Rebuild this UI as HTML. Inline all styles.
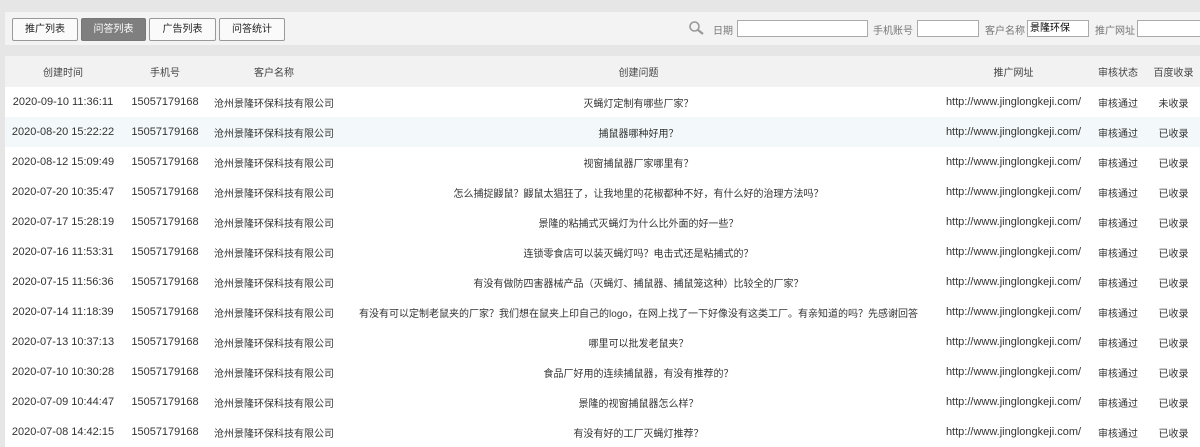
<!DOCTYPE html>
<html><head><meta charset="utf-8"><style>
body{margin:0;width:1200px;height:445px;overflow:hidden;background:#e6e6e6;font-family:"Liberation Sans","Noto Sans CJK SC",sans-serif;font-size:11px;color:#333;position:relative}
.bar{position:absolute;left:5px;top:12px;width:1195px;height:33px;background:#f3f3f3}
.btn{position:absolute;top:6px;border:1px solid #999;border-radius:2px;background:#fafafa;text-align:center;line-height:21px;font-size:10px;color:#222;box-sizing:border-box;height:23px}
.btn.on{background:#7f7f7f;color:#fff;border-color:#777}
.lbl{position:absolute;top:10px;color:#777;font-size:10px}
.inp{position:absolute;top:8px;height:17px;border:1px solid #aaa;background:#fff;box-sizing:border-box;font-size:10px;line-height:15px;padding-left:2px;color:#000}
table{position:absolute;left:5px;top:56px;width:1195px;border-collapse:collapse;table-layout:fixed}
td,th{text-align:center;white-space:nowrap;overflow:hidden;padding:0;font-weight:normal}
th{height:31px;background:#f2f2f2;color:#444;font-size:10px}
td{height:30px}
td.c{font-size:10px}
tr.a td{background:#fff}tr.b td{background:#f3f8fa}
</style></head><body>
<div class="bar">
<div class="btn" style="left:7px;width:66px">推广列表</div>
<div class="btn on" style="left:76px;width:65px">问答列表</div>
<div class="btn" style="left:144px;width:67px">广告列表</div>
<div class="btn" style="left:214px;width:66px">问答统计</div>
<svg style="position:absolute;left:683px;top:8px" width="18" height="16" viewBox="0 0 18 16"><circle cx="6.5" cy="6.5" r="4.5" fill="none" stroke="#999" stroke-width="1.6"/><path d="M10 10 L15 14" stroke="#999" stroke-width="2.2"/></svg>
<span class="lbl" style="left:708px">日期</span><div class="inp" style="left:732px;width:131px"></div>
<span class="lbl" style="left:868px">手机账号</span><div class="inp" style="left:912px;width:62px"></div>
<span class="lbl" style="left:980px">客户名称</span><div class="inp" style="left:1022px;width:62px">景隆环保</div>
<span class="lbl" style="left:1090px">推广网址</span><div class="inp" style="left:1132px;width:70px"></div>
</div>
<table>
<colgroup><col style="width:116px"><col style="width:88px"><col style="width:130px"><col style="width:599px"><col style="width:151px"><col style="width:58px"><col style="width:53px"></colgroup>
<tr><th>创建时间</th><th>手机号</th><th>客户名称</th><th>创建问题</th><th>推广网址</th><th>审核状态</th><th>百度收录</th></tr>
<tr class="a"><td>2020-09-10 11:36:11</td><td>15057179168</td><td class="c">沧州景隆环保科技有限公司</td><td class="c">灭蝇灯定制有哪些厂家？</td><td>http://www.jinglongkeji.com/</td><td class="c">审核通过</td><td class="c">未收录</td></tr>
<tr class="b"><td>2020-08-20 15:22:22</td><td>15057179168</td><td class="c">沧州景隆环保科技有限公司</td><td class="c">捕鼠器哪种好用？</td><td>http://www.jinglongkeji.com/</td><td class="c">审核通过</td><td class="c">已收录</td></tr>
<tr class="a"><td>2020-08-12 15:09:49</td><td>15057179168</td><td class="c">沧州景隆环保科技有限公司</td><td class="c">视窗捕鼠器厂家哪里有？</td><td>http://www.jinglongkeji.com/</td><td class="c">审核通过</td><td class="c">已收录</td></tr>
<tr class="a"><td>2020-07-20 10:35:47</td><td>15057179168</td><td class="c">沧州景隆环保科技有限公司</td><td class="c">怎么捕捉鼹鼠？鼹鼠太猖狂了，让我地里的花椒都种不好，有什么好的治理方法吗？</td><td>http://www.jinglongkeji.com/</td><td class="c">审核通过</td><td class="c">已收录</td></tr>
<tr class="a"><td>2020-07-17 15:28:19</td><td>15057179168</td><td class="c">沧州景隆环保科技有限公司</td><td class="c">景隆的粘捕式灭蝇灯为什么比外面的好一些？</td><td>http://www.jinglongkeji.com/</td><td class="c">审核通过</td><td class="c">已收录</td></tr>
<tr class="a"><td>2020-07-16 11:53:31</td><td>15057179168</td><td class="c">沧州景隆环保科技有限公司</td><td class="c">连锁零食店可以装灭蝇灯吗？电击式还是粘捕式的？</td><td>http://www.jinglongkeji.com/</td><td class="c">审核通过</td><td class="c">已收录</td></tr>
<tr class="a"><td>2020-07-15 11:56:36</td><td>15057179168</td><td class="c">沧州景隆环保科技有限公司</td><td class="c">有没有做防四害器械产品（灭蝇灯、捕鼠器、捕鼠笼这种）比较全的厂家？</td><td>http://www.jinglongkeji.com/</td><td class="c">审核通过</td><td class="c">已收录</td></tr>
<tr class="a"><td>2020-07-14 11:18:39</td><td>15057179168</td><td class="c">沧州景隆环保科技有限公司</td><td class="c">有没有可以定制老鼠夹的厂家？我们想在鼠夹上印自己的logo，在网上找了一下好像没有这类工厂。有亲知道的吗？先感谢回答</td><td>http://www.jinglongkeji.com/</td><td class="c">审核通过</td><td class="c">已收录</td></tr>
<tr class="a"><td>2020-07-13 10:37:13</td><td>15057179168</td><td class="c">沧州景隆环保科技有限公司</td><td class="c">哪里可以批发老鼠夹？</td><td>http://www.jinglongkeji.com/</td><td class="c">审核通过</td><td class="c">已收录</td></tr>
<tr class="a"><td>2020-07-10 10:30:28</td><td>15057179168</td><td class="c">沧州景隆环保科技有限公司</td><td class="c">食品厂好用的连续捕鼠器，有没有推荐的？</td><td>http://www.jinglongkeji.com/</td><td class="c">审核通过</td><td class="c">已收录</td></tr>
<tr class="a"><td>2020-07-09 10:44:47</td><td>15057179168</td><td class="c">沧州景隆环保科技有限公司</td><td class="c">景隆的视窗捕鼠器怎么样？</td><td>http://www.jinglongkeji.com/</td><td class="c">审核通过</td><td class="c">已收录</td></tr>
<tr class="a"><td>2020-07-08 14:42:15</td><td>15057179168</td><td class="c">沧州景隆环保科技有限公司</td><td class="c">有没有好的工厂灭蝇灯推荐？</td><td>http://www.jinglongkeji.com/</td><td class="c">审核通过</td><td class="c">已收录</td></tr>
</table>
</body></html>
